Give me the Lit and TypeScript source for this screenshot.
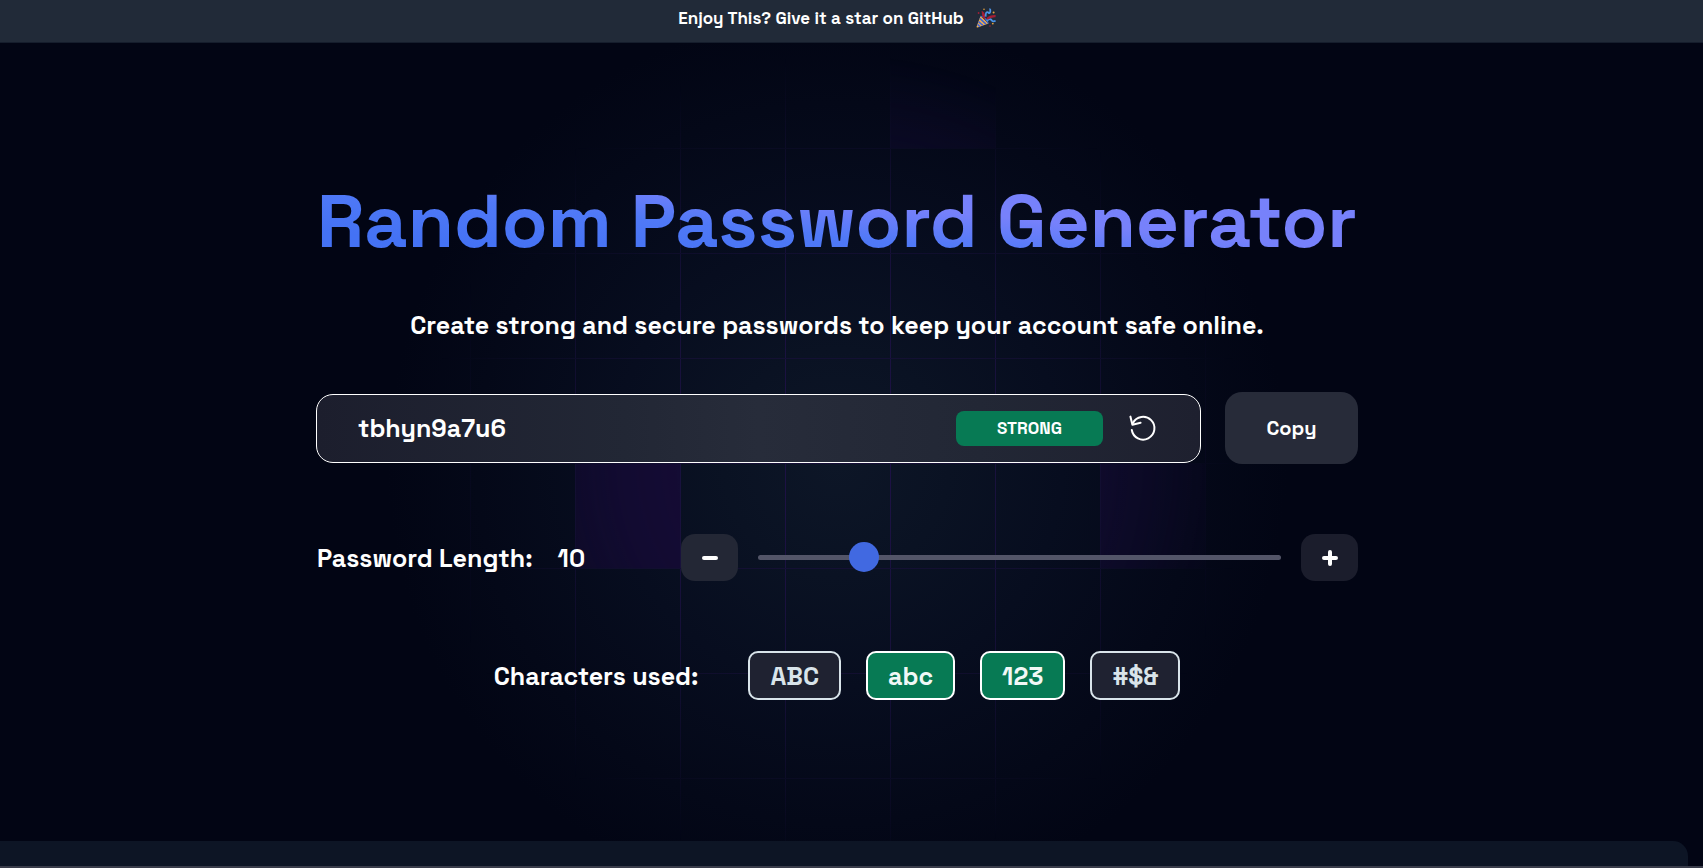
import { LitElement, html, css, svg } from "lit";
import { customElement, state } from "lit/decorators.js";

interface CharSet {
  id: string;
  label: string;
}

const CHAR_SETS: CharSet[] = [
  { id: "upper", label: "ABC" },
  { id: "lower", label: "abc" },
  { id: "digits", label: "123" },
  { id: "symbols", label: "#$&" },
];

const GRID_STEP = 105;

@customElement("grid-backdrop")
class GridBackdrop extends LitElement {
  static styles = css`
    :host {
      display: flex;
      justify-content: center;
      overflow: hidden;
    }
    .grid {
      flex: none;
    }
  `;

  render() {
    const verticals = [1, 2, 3, 4, 5, 6, 7, 8].map((n) => n * GRID_STEP);
    const horizontals = [0, 1, 2, 3, 4, 5, 6, 7, 8].map((n) => n * GRID_STEP);
    return html`
      <svg class="grid" width="945" height="840" viewBox="0 0 945 840" aria-hidden="true">
        <defs>
          <radialGradient id="glow" gradientUnits="userSpaceOnUse" cx="472" cy="420" r="450">
            <stop offset="0" stop-color="#0d1627" />
            <stop offset="0.25" stop-color="#0a1223" />
            <stop offset="0.5" stop-color="#070d1f" />
            <stop offset="0.8" stop-color="#040818" />
            <stop offset="1" stop-color="#020514" />
          </radialGradient>
          <radialGradient id="fade" gradientUnits="userSpaceOnUse" cx="472" cy="420" r="430">
            <stop offset="0" stop-color="#fff" />
            <stop offset="0.5" stop-color="#aaa" />
            <stop offset="0.95" stop-color="#000" />
          </radialGradient>
          <mask id="vignette"><rect width="945" height="840" fill="url(#fade)" /></mask>
        </defs>
        <rect width="945" height="840" fill="url(#glow)" />
        <g mask="url(#vignette)">
          <rect x="210" y="420" width="105" height="105" fill="#180a3a" />
          <rect x="735" y="420" width="105" height="105" fill="#180a3a" />
          <rect x="525" y="0" width="105" height="105" fill="#1b0b42" fill-opacity="0.85" />
          ${verticals.map((x) => svg`<rect x=${x} y="0" width="1" height="840" fill="#1f1247" />`)}
          ${horizontals.map((y) => svg`<rect x="0" y=${y} width="945" height="1" fill="#171038" />`)}
        </g>
      </svg>
    `;
  }
}

@customElement("party-popper")
class PartyPopper extends LitElement {
  static styles = css`
    :host {
      display: inline-flex;
    }
  `;

  render() {
    return html`
      <svg width="20" height="20" viewBox="0 0 20 20" aria-hidden="true">
        <path d="M4.6 8 12.4 15.6 1.6 19.4Q.4 19.6.6 18.4Z" fill="#f2b04c" />
        <path d="M3.8 10.4 10 16.2M2.6 13.6 6.8 17.4M1.6 16.4 4 18.6" stroke="#4166d8" stroke-width="1.6" fill="none" />
        <path d="M4.6 8.4Q7 8 9.6 11T12.2 15.4" stroke="#3d65c8" stroke-width="1.4" fill="none" />
        <path d="M7 10C5.8 7.4 6 5.4 5.6 3 8.4 3.6 9.8 6.6 9 11.6Z" fill="#a41e35" />
        <path d="M9.6 8.6C9.8 6 9.4 4.6 11 4.2S13 6.4 14 4.4 13.6 1.6 14.4.6" stroke="#4a94e8" stroke-width="1.8" fill="none" />
        <path d="M10.8 12.8C12.8 11 14.6 10.6 15.4 12S17.4 13.8 19.6 12.8" stroke="#4a94e8" stroke-width="1.8" fill="none" />
        <path d="M11 11C13.4 8.8 16 8 19.6 8.2" stroke="#a41e35" stroke-width="2.2" fill="none" />
        <circle cx="2.6" cy="5" r=".9" fill="#a41e35" />
        <circle cx="8" cy="1.2" r=".8" fill="#e5a33c" />
        <circle cx="17.6" cy="4.4" r="1" fill="#e5a33c" />
        <circle cx="16.8" cy="15.6" r=".9" fill="#e5a33c" />
        <circle cx="14" cy="18" r=".8" fill="#a41e35" />
      </svg>
    `;
  }
}

@customElement("app-root")
class AppRoot extends LitElement {
  @state() private length = 10;
  @state() private password = "tbhyn9a7u6";
  @state() private active = new Set(["lower", "digits"]);

  static styles = css`
    :host {
      display: flex;
      flex-direction: column;
      min-height: 100vh;
      box-sizing: border-box;
      overflow: hidden;
      background: #020514;
      color: #fff;
      font-family: "Space Grotesk", Inter, "Liberation Sans", sans-serif;
      font-weight: 600;
      border-bottom: 2px solid #3a3d4b;
    }
    button,
    input {
      margin: 0;
      padding: 0;
      border: 0;
      color: inherit;
      font: inherit;
    }
    button {
      cursor: pointer;
    }
    .banner {
      display: flex;
      justify-content: center;
      align-items: center;
      box-sizing: border-box;
      height: 43px;
      padding: 0 29px 6px 0;
      background: #212a38;
      border-bottom: 1px solid #151d2c;
    }
    .banner-link {
      display: flex;
      align-items: center;
      gap: 12px;
      color: inherit;
      font-size: 17px;
      line-height: 24px;
      text-decoration: none;
      font-weight: 700;
    }
    .stage {
      position: relative;
      flex: 1;
      display: flex;
      justify-content: center;
      padding: 128px 29px 138px 0;
    }
    .backdrop {
      position: absolute;
      inset: 0 29px 0 0;
    }
    .generator {
      position: relative;
      display: flex;
      flex-direction: column;
      align-items: center;
      width: 100%;
      max-width: 1042px;
    }
    .title {
      margin: 0;
      font-size: 75px;
      line-height: 100px;
      font-weight: 600;
      white-space: nowrap;
      color: transparent;
      background: linear-gradient(to right top, #4472f4 20%, #5079f7 42%, #7781fb 60%, #7782fb);
      background-clip: text;
      -webkit-background-clip: text;
    }
    .subtitle {
      margin: 36px 0 0;
      font-size: 25px;
      line-height: 36px;
      font-weight: 700;
    }
    .output {
      display: flex;
      align-items: center;
      gap: 24px;
      width: 100%;
      margin-top: 49px;
    }
    .field {
      flex: 1;
      display: flex;
      align-items: center;
      box-sizing: border-box;
      height: 69px;
      padding: 0 42px 0 41px;
      border: 1px solid #fff;
      border-radius: 17px;
      background: linear-gradient(90deg, #1c1e2d, #222735 35%, #272c3a 50%, #222735 75%, #1e202f);
    }
    .password {
      flex: 1;
      min-width: 0;
      background: transparent;
      font-size: 25px;
      line-height: 36px;
      outline: none;
    }
    .strength {
      width: 147px;
      border-radius: 8px;
      background: #077a54;
      font-size: 17px;
      line-height: 35px;
      font-weight: 700;
      text-align: center;
    }
    .refresh {
      display: flex;
      margin-left: 25px;
      background: transparent;
    }
    .copy {
      width: 133px;
      height: 72px;
      border-radius: 17px;
      background: #272b39;
      font-size: 20px;
    }
    .length {
      display: flex;
      align-items: center;
      width: 100%;
      margin-top: 70px;
    }
    .length-text {
      display: flex;
      gap: 25px;
      flex: 0 0 365px;
      box-sizing: border-box;
      padding-left: 1px;
      font-size: 25px;
      line-height: 36px;
    }
    .step {
      display: flex;
      align-items: center;
      justify-content: center;
      width: 57px;
      height: 47px;
      border-radius: 14px;
      background: #232735;
    }
    .step.more {
      background: #1b1d2c;
    }
    .slider {
      flex: 1;
      min-width: 0;
      height: 30px;
      margin: 0 20px;
      appearance: none;
      -webkit-appearance: none;
      background: transparent;
    }
    .slider::-webkit-slider-runnable-track {
      height: 5px;
      border-radius: 3px;
      background: #535568;
    }
    .slider::-webkit-slider-thumb {
      -webkit-appearance: none;
      width: 30px;
      height: 30px;
      margin-top: -13px;
      border-radius: 50%;
      background: #4169e1;
    }
    .charsets {
      display: flex;
      align-items: center;
      gap: 25px;
      margin-top: 70px;
      font-size: 25px;
      line-height: 36px;
    }
    .charsets-label {
      margin-right: 25px;
    }
    .chip {
      box-sizing: border-box;
      height: 49px;
      padding: 0 20px;
      border: 2px solid #d9e4ea;
      border-radius: 10px;
      background: #1f2231;
      color: #d9e4ea;
    }
    .chip.on {
      border-color: #fff;
      background: #077a54;
      color: #f1f8f6;
    }
    .panel {
      position: relative;
      height: 25px;
      margin-right: 15px;
      border-radius: 0 15px 0 0;
      background: #0d1525;
    }
  `;

  private regenerate() {
    const pools: Record<string, string> = {
      upper: "ABCDEFGHIJKLMNOPQRSTUVWXYZ",
      lower: "abcdefghijklmnopqrstuvwxyz",
      digits: "0123456789",
      symbols: "#$&!@%*",
    };
    const pool = [...this.active].map((id) => pools[id]).join("");
    this.password = Array.from({ length: this.length }, () => pool[Math.floor(Math.random() * pool.length)]).join("");
  }

  private setLength(value: number) {
    this.length = Math.max(1, Math.min(50, value));
    this.regenerate();
  }

  private toggle(id: string) {
    const next = new Set(this.active);
    if (next.has(id)) next.delete(id);
    else next.add(id);
    if (next.size === 0) return;
    this.active = next;
    this.regenerate();
  }

  render() {
    return html`
      <header class="banner">
        <a class="banner-link" href="#star">Enjoy This? Give it a star on GitHub <party-popper></party-popper></a>
      </header>
      <main class="stage">
        <grid-backdrop class="backdrop"></grid-backdrop>
        <div class="generator">
          <h1 class="title">Random Password Generator</h1>
          <p class="subtitle">Create strong and secure passwords to keep your account safe online.</p>
          <div class="output">
            <div class="field">
              <input class="password" type="text" readonly aria-label="Password" .value=${this.password} />
              <span class="strength">STRONG</span>
              <button class="refresh" aria-label="Generate a new password" @click=${this.regenerate}>
                <svg width="30" height="30" viewBox="0 0 30 30" fill="none" stroke="#fff" stroke-width="2" stroke-linecap="round" stroke-linejoin="round">
                  <path d="M3.8 17A11.4 11.4 0 1 0 4.9 10" />
                  <path d="M2.4 3.6 4.4 11.8 12.6 9.8" />
                </svg>
              </button>
            </div>
            <button class="copy" @click=${() => navigator.clipboard?.writeText(this.password)}>Copy</button>
          </div>
          <div class="length">
            <div class="length-text">
              <label for="length">Password Length:</label>
              <output for="length">${this.length}</output>
            </div>
            <button class="step" aria-label="Shorter" @click=${() => this.setLength(this.length - 1)}>
              <svg width="18" height="18" viewBox="0 0 18 18" stroke="#fff" stroke-width="4" stroke-linecap="round"><path d="M3 9H15" /></svg>
            </button>
            <input
              id="length"
              class="slider"
              type="range"
              min="1"
              max="50"
              .value=${String(this.length)}
              @input=${(e: Event) => this.setLength(Number((e.target as HTMLInputElement).value))}
            />
            <button class="step more" aria-label="Longer" @click=${() => this.setLength(this.length + 1)}>
              <svg width="18" height="18" viewBox="0 0 18 18" stroke="#fff" stroke-width="4" stroke-linecap="round"><path d="M3 9H15M9 3V15" /></svg>
            </button>
          </div>
          <div class="charsets" role="group" aria-labelledby="charsets-label">
            <span id="charsets-label" class="charsets-label">Characters used:</span>
            ${CHAR_SETS.map(
              (set) => html`<button
                class="chip ${this.active.has(set.id) ? "on" : ""}"
                aria-pressed=${this.active.has(set.id)}
                @click=${() => this.toggle(set.id)}
              >${set.label}</button>`,
            )}
          </div>
        </div>
      </main>
      <section class="panel" aria-label="About"></section>
    `;
  }
}
